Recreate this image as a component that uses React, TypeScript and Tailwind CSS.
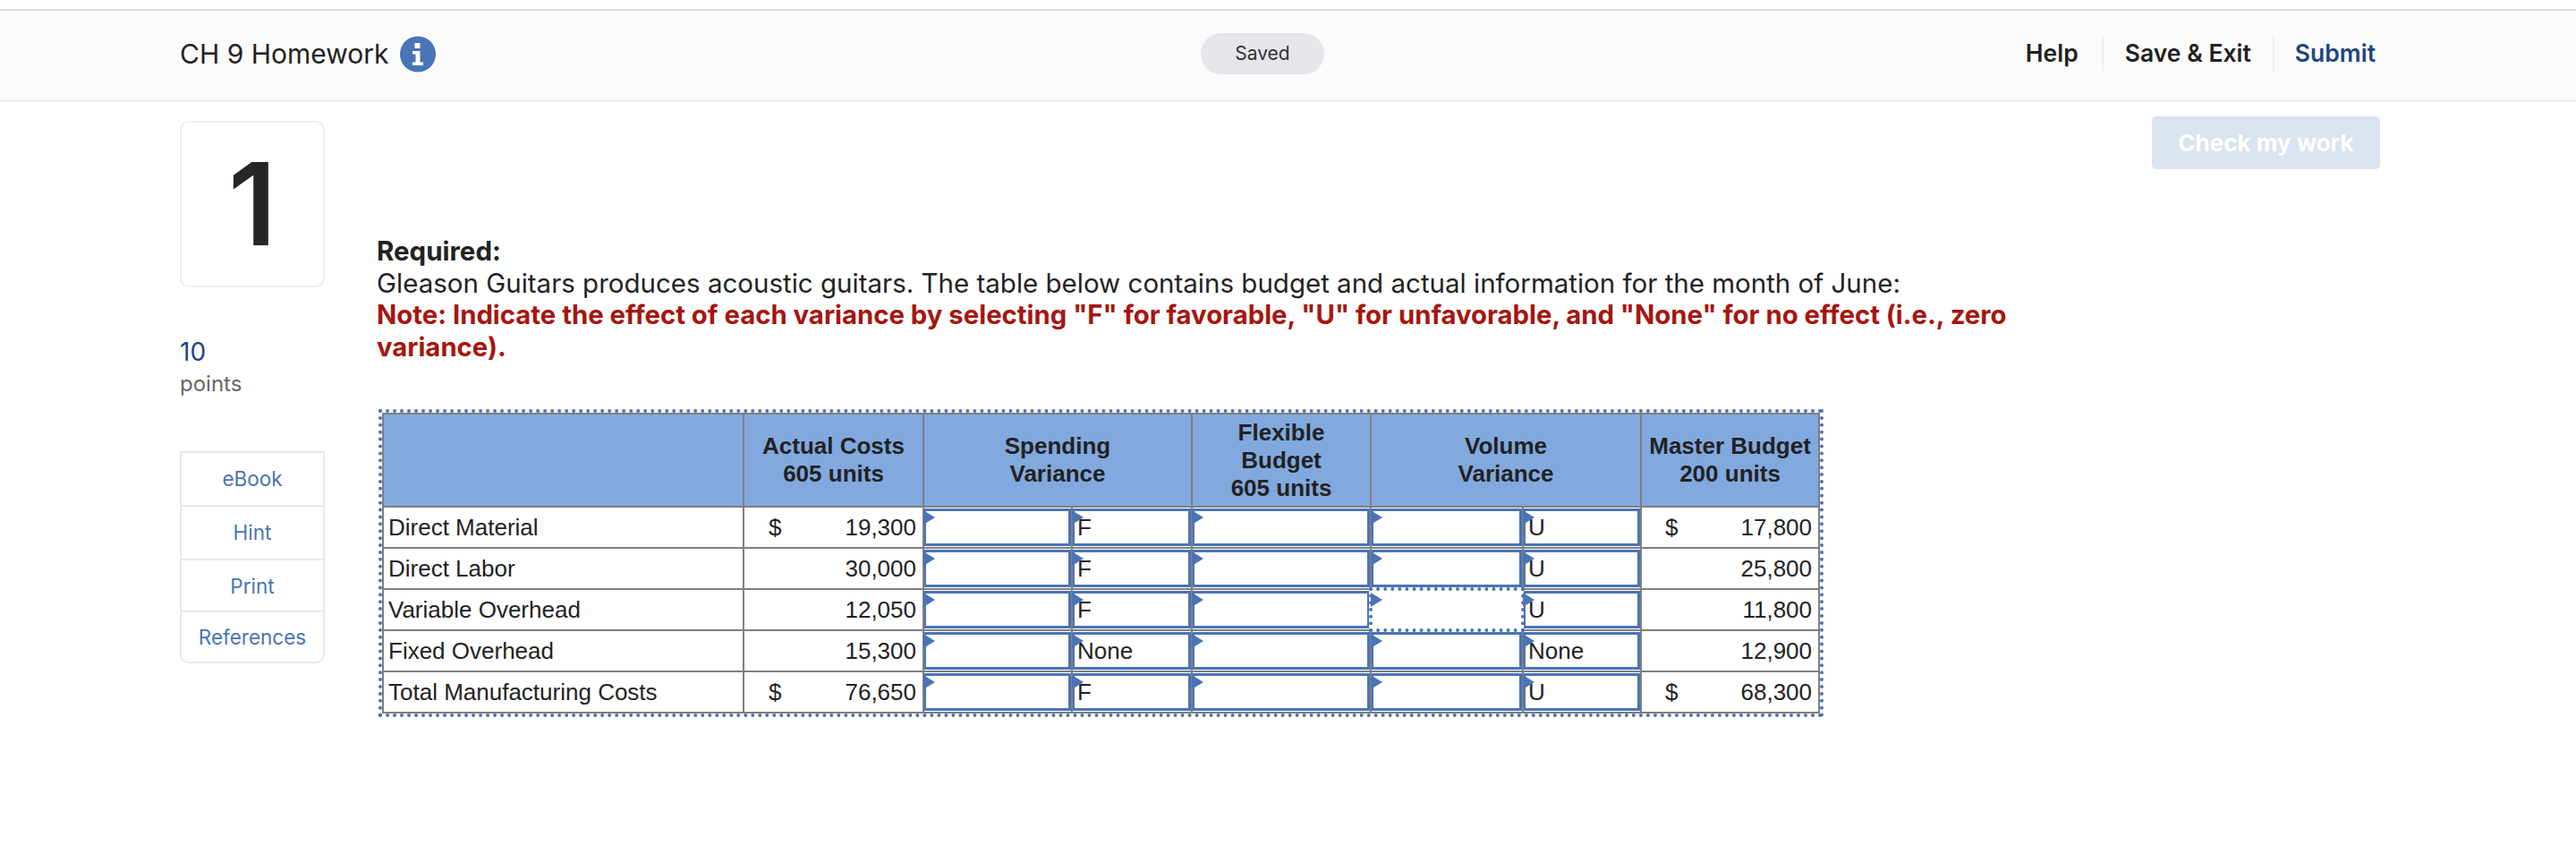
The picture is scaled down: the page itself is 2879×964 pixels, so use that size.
const sansFont = "font-['Inter','Noto_Sans',sans-serif]";

type Row = {
  label: string;
  actual: string;
  actualSign?: boolean;
  spending: string;
  volume: string;
  master: string;
  masterSign?: boolean;
  focusVolume?: boolean;
};

const rows: Row[] = [
  { label: "Direct Material", actual: "19,300", actualSign: true, spending: "F", volume: "U", master: "17,800", masterSign: true },
  { label: "Direct Labor", actual: "30,000", spending: "F", volume: "U", master: "25,800" },
  { label: "Variable Overhead", actual: "12,050", spending: "F", volume: "U", master: "11,800", focusVolume: true },
  { label: "Fixed Overhead", actual: "15,300", spending: "None", volume: "None", master: "12,900" },
  { label: "Total Manufacturing Costs", actual: "76,650", actualSign: true, spending: "F", volume: "U", master: "68,300", masterSign: true },
];

const InfoIcon = () => (
  <svg width="40" height="41" viewBox="0 0 40 41" className="ml-[13px]">
    <circle cx="20" cy="20.5" r="20" fill="#4a74b5" />
    <rect x="16.5" y="8" width="6" height="6" fill="#fff" />
    <path d="M14 17h8.5v12.5H26V33H14v-3.5h3.5v-9H14z" fill="#fff" />
  </svg>
);

const InputCell = ({ value, focus }: { value?: string; focus?: boolean }) => (
  <td className="relative h-[46px] border-2 border-[#7f7f7f] p-0 align-middle">
    <div
      className={
        focus
          ? "mx-[-3px] my-[-3px] flex h-[50px] items-center border-[4px] border-dotted border-[#4a74b5] bg-white pl-[3px]"
          : "flex h-[42px] items-center border-[3px] border-l-2 border-[#4a74b5] bg-white pl-[3px]"
      }
    >
      {value}
    </div>
    <span className="absolute left-[-1px] top-[3px] h-0 w-0 border-y-[8px] border-l-[13px] border-y-transparent border-l-[#4a74b5]" />
  </td>
);

const MoneyCell = ({ sign, value, signPad }: { sign?: boolean; value: string; signPad: string }) => (
  <td className="h-[46px] border-2 border-[#7f7f7f] p-0">
    <div className={"flex items-center justify-between pr-[7px] " + signPad}>
      <span>{sign ? "$" : ""}</span>
      <span>{value}</span>
    </div>
  </td>
);

const HeadCell = ({ lines, span }: { lines: string[]; span?: number }) => (
  <th colSpan={span} className="border-2 border-[#7f7f7f] p-0 text-center align-middle font-bold leading-[31px]">
    {lines.map((l) => (
      <div key={l}>{l}</div>
    ))}
  </th>
);

const BudgetTable = () => (
  <div className="ml-[2px] w-fit border-[4px] border-dotted border-[#4a74b5]">
    <table className="w-[1605px] table-fixed border-collapse font-['Liberation_Sans',Arial,sans-serif] text-[26px] text-[#222]">
      <colgroup>
        <col className="w-[403px]" />
        <col className="w-[201px]" />
        <col className="w-[166px]" />
        <col className="w-[134px]" />
        <col className="w-[200px]" />
        <col className="w-[170px]" />
        <col className="w-[132px]" />
        <col className="w-[199px]" />
      </colgroup>
      <thead>
        <tr className="h-[104px] bg-[#81a9df]">
          <th className="border-2 border-[#7f7f7f]" />
          <HeadCell lines={["Actual Costs", "605 units"]} />
          <HeadCell span={2} lines={["Spending", "Variance"]} />
          <HeadCell lines={["Flexible", "Budget", "605 units"]} />
          <HeadCell span={2} lines={["Volume", "Variance"]} />
          <HeadCell lines={["Master Budget", "200 units"]} />
        </tr>
      </thead>
      <tbody>
        {rows.map((r) => (
          <tr key={r.label}>
            <td className="h-[46px] border-2 border-[#7f7f7f] p-0 pl-[5px]">{r.label}</td>
            <MoneyCell sign={r.actualSign} value={r.actual} signPad="pl-[27px]" />
            <InputCell />
            <InputCell value={r.spending} />
            <InputCell />
            <InputCell focus={r.focusVolume} />
            <InputCell value={r.volume} />
            <MoneyCell sign={r.masterSign} value={r.master} signPad="pl-[26px]" />
          </tr>
        ))}
      </tbody>
    </table>
  </div>
);

const sideLinks = [
  { label: "eBook", h: "h-[60px]" },
  { label: "Hint", h: "h-[60px]" },
  { label: "Print", h: "h-[58px] pt-[2px]" },
  { label: "References", h: "h-[55px]" },
];

export default function App() {
  return (
    <div className={"min-h-screen w-full bg-white pt-[10px] text-[#222] " + sansFont}>
      <header className="flex h-[104px] items-center border-y-2 border-t-[#ddd] border-b-[#eee] bg-[#fbfbfb] pb-[4px] pl-[201px] pr-[224px]">
        <div className="flex w-[1141px] items-center">
          <span className="text-[30px] leading-none">CH 9 Homework</span>
          <InfoIcon />
        </div>
        <div className="flex h-[46px] w-[138px] items-center justify-center rounded-full bg-[#e6e6ea] text-[21px] text-[#333]">
          Saved
        </div>
        <nav className="ml-auto flex items-center text-[26.5px] font-semibold">
          <span className="flex h-[40px] items-center border-r-2 border-[#eee] pr-[26px]">Help</span>
          <span className="flex h-[40px] items-center border-r-2 border-[#eee] px-[24px]">Save &amp; Exit</span>
          <span className="pl-[23px] text-[#1f4583]">Submit</span>
        </nav>
      </header>

      <main className="flex items-start justify-between pl-[201px] pr-[219px] pt-[16px]">
        <div className="flex">
          <aside className="mt-[5px] w-[162px]">
            <div className="flex h-[186px] items-center justify-center rounded-[10px] border-2 border-[#eee] text-[128px] font-semibold leading-none text-[#262626]">
              1
            </div>
            <div className="mt-[56px] text-[28px] leading-[32px] text-[#1f4583]">10</div>
            <div className="mt-[4px] text-[24px] leading-[32px] text-[#666]">points</div>
            <div className="mt-[59px] overflow-hidden rounded-b-[10px] border-2 border-[#e8e8e8]">
              {sideLinks.map((l, i) => (
                <div
                  key={l.label}
                  className={
                    "flex items-center justify-center text-[22.5px] text-[#4a74b5] " +
                    l.h +
                    (i < sideLinks.length - 1 ? " border-b-2 border-[#e8e8e8]" : "")
                  }
                >
                  {l.label}
                </div>
              ))}
            </div>
          </aside>

          <section className="ml-[58px] w-[1840px] pt-[133px]">
            <div className="text-[29.5px] leading-[35.5px]">
              <p className="font-bold">Required:</p>
              <p>Gleason Guitars produces acoustic guitars. The table below contains budget and actual information for the month of June:</p>
              <p className="text-[29.3px] font-bold text-[#a5160f]">
                Note: Indicate the effect of each variance by selecting "F" for favorable, "U" for unfavorable, and "None" for no effect (i.e., zero variance).
              </p>
            </div>
            <div className="mt-[52px]">
              <BudgetTable />
            </div>
          </section>
        </div>

        <button className="flex h-[59px] w-[255px] items-center justify-center rounded-[5px] bg-[#dae3f0] text-[26px] font-bold text-white">
          Check my work
        </button>
      </main>
    </div>
  );
}
